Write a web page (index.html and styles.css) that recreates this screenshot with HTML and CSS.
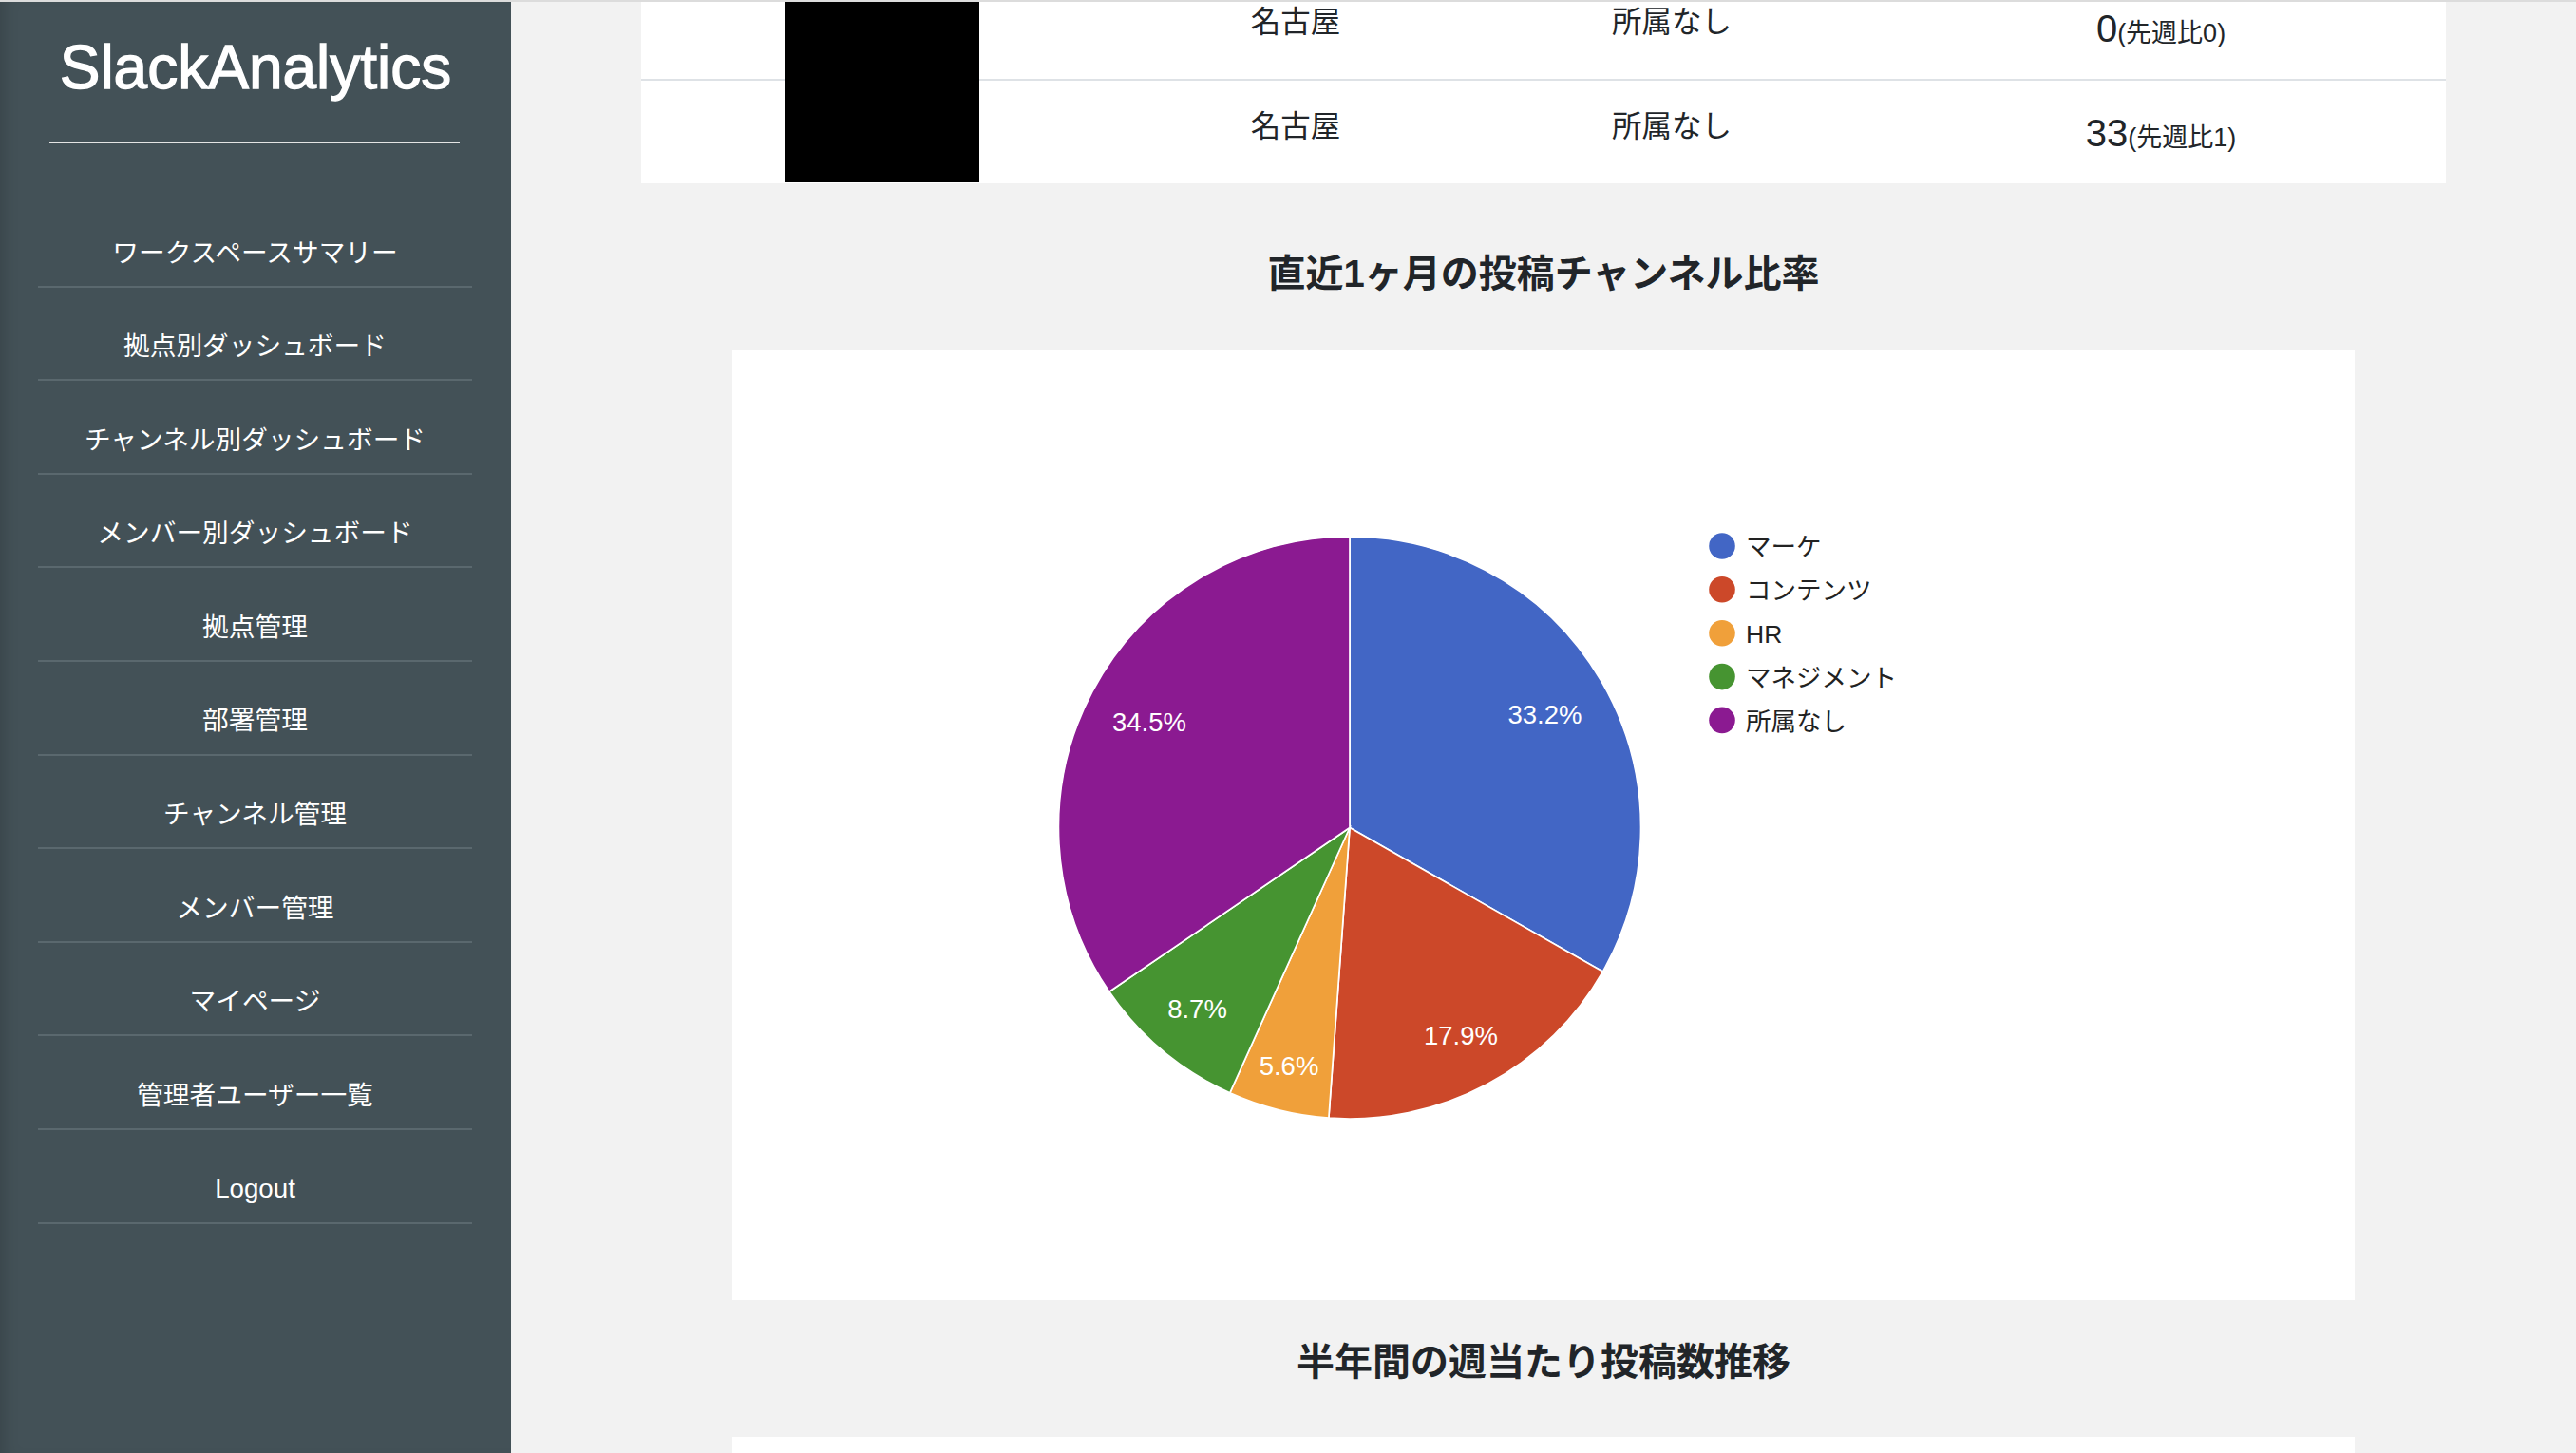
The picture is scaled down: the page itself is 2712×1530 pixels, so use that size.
FILE: index.html
```html
<!DOCTYPE html>
<html lang="ja">
<head>
  <meta charset="UTF-8" />
  <meta name="viewport" content="width=device-width, initial-scale=1.0" />
  <title>SlackAnalytics</title>
  <link rel="stylesheet" href="styles.css">
</head>
<body>
  <div class="sidebar">
    <h1 class="brand">SlackAnalytics</h1>
    <hr class="brand-rule">
    <ul class="nav">
      <li><a href="#">ワークスペースサマリー</a></li>
      <li><a href="#">拠点別ダッシュボード</a></li>
      <li><a href="#">チャンネル別ダッシュボード</a></li>
      <li><a href="#">メンバー別ダッシュボード</a></li>
      <li><a href="#">拠点管理</a></li>
      <li><a href="#">部署管理</a></li>
      <li><a href="#">チャンネル管理</a></li>
      <li><a href="#">メンバー管理</a></li>
      <li><a href="#">マイページ</a></li>
      <li><a href="#">管理者ユーザー一覧</a></li>
      <li><a href="#">Logout</a></li>
    </ul>
  </div>

  <div class="main">
    <div class="table-card">
      <div class="row">
        <div class="cell"></div>
        <div class="cell text">名古屋</div>
        <div class="cell text">所属なし</div>
        <div class="cell count"><span class="num">0</span><span class="diff">(先週比0)</span></div>
      </div>
      <div class="row">
        <div class="cell"></div>
        <div class="cell text">名古屋</div>
        <div class="cell text">所属なし</div>
        <div class="cell count"><span class="num">33</span><span class="diff">(先週比1)</span></div>
      </div>
      <div class="redact"></div>
    </div>

    <h3 class="section-title">直近1ヶ月の投稿チャンネル比率</h3>
    <div class="chart-card">
      <svg class="pie" width="1708" height="1000" viewBox="0 0 1708 1000">
        <g stroke="#ffffff" stroke-width="1.7">
          <path d="M650,502.5 L650,196 A306.5,306.5 0 0 1 916.4,654.1 Z" fill="#4266c5"/>
          <path d="M650,502.5 L916.4,654.1 A306.5,306.5 0 0 1 627.9,808.2 Z" fill="#cc4829"/>
          <path d="M650,502.5 L627.9,808.2 A306.5,306.5 0 0 1 523.8,781.8 Z" fill="#f0a03a"/>
          <path d="M650,502.5 L523.8,781.8 A306.5,306.5 0 0 1 396.8,675.3 Z" fill="#469431"/>
          <path d="M650,502.5 L396.8,675.3 A306.5,306.5 0 0 1 650,196 Z" fill="#8b1a91"/>
        </g>
        <g class="pie-label" text-anchor="middle">
          <text x="855.5" y="392.5">33.2%</text>
          <text x="767" y="731">17.9%</text>
          <text x="586" y="762.5">5.6%</text>
          <text x="489.5" y="703">8.7%</text>
          <text x="439" y="401">34.5%</text>
        </g>
        <g class="legend">
          <circle cx="1042" cy="206" r="13.8" fill="#4266c5"/>
          <text x="1067" y="216.3">マーケ</text>
          <circle cx="1042" cy="251.8" r="13.8" fill="#cc4829"/>
          <text x="1067" y="262.1">コンテンツ</text>
          <circle cx="1042" cy="297.7" r="13.8" fill="#f0a03a"/>
          <text x="1067" y="308">HR</text>
          <circle cx="1042" cy="343.6" r="13.8" fill="#469431"/>
          <text x="1067" y="353.9">マネジメント</text>
          <circle cx="1042" cy="389.4" r="13.8" fill="#8b1a91"/>
          <text x="1067" y="399.7">所属なし</text>
        </g>
      </svg>
    </div>

    <h3 class="section-title">半年間の週当たり投稿数推移</h3>
    <div class="chart-card short"></div>
  </div>
</body>
</html>
```

FILE: styles.css
```css
body {
  margin: 0;
  height: 1528px;
  border-top: 2px solid #dcdcdc;
  display: flex;
  overflow: hidden;
  font-family: "Liberation Sans", "Noto Sans CJK JP", sans-serif;
  background: #f2f2f2;
}
.sidebar {
  width: 538px;
  flex: none;
  box-sizing: border-box;
  padding-top: 33px;
  background: #435157;
  box-shadow: inset 14px 0 18px -12px rgba(0,0,0,0.18);
}
.brand {
  margin: 0;
  font-size: 64px;
  line-height: 73px;
  font-weight: normal;
  -webkit-text-stroke: 1.3px #ffffff;
  text-align: center;
  color: #ffffff;
}
.brand-rule {
  height: 2px;
  margin: 41px 54px 0 52px;
  border: none;
  background: #e4e4e4;
}
.nav {
  list-style: none;
  margin: 53px 41px 0 40px;
  padding: 0;
}
.nav a {
  display: block;
  padding: 42.5px 0 14.1px;
  line-height: 40px;
  font-size: 27.7px;
  color: #ffffff;
  text-align: center;
  text-decoration: none;
  border-bottom: 2px solid #5a686e;
}
.main {
  flex: 1;
  overflow: hidden;
  box-sizing: border-box;
  padding: 0 137px;
}
.table-card {
  position: relative;
  margin: -27px 0 32px;
  background: #ffffff;
}
.row {
  display: grid;
  grid-template-columns: 508px 362px 430px 600px;
  align-items: center;
  height: 108px;
}
.row + .row {
  border-top: 2px solid #dee2e6;
}
.cell {
  text-align: center;
  color: #212529;
}
.cell.text {
  font-size: 31.5px;
  line-height: 44px;
  padding-bottom: 12px;
}
.cell.count {
  line-height: 48px;
  padding-top: 10px;
}
.num {
  font-size: 40px;
}
.diff {
  font-size: 27px;
}
.redact {
  position: absolute;
  top: 0;
  left: 151px;
  width: 205px;
  height: 217px;
  background: #000000;
}
.section-title {
  margin: 37px 0 51px;
  font-size: 40px;
  line-height: 56px;
  font-weight: bold;
  text-align: center;
  color: #212529;
}
.table-card + .section-title {
  margin: 67px 0 53px;
}
.chart-card {
  width: 1708px;
  height: 1000px;
  margin: 0 auto;
  background: #ffffff;
}
.chart-card.short {
  height: 400px;
}
.pie {
  display: block;
}
.pie-label text {
  font-family: "Liberation Sans", sans-serif;
  font-size: 27.5px;
  fill: #ffffff;
}
.legend text {
  font-family: "Liberation Sans", "Noto Sans CJK JP", sans-serif;
  font-size: 26.5px;
  fill: #222222;
}
```
